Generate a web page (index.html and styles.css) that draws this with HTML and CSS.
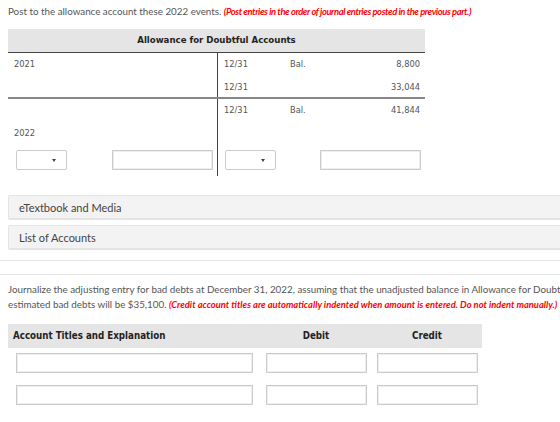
FILE: index.html
```html
<!DOCTYPE html>
<html>
<head>
	<meta charset="utf-8">
	<link rel="stylesheet" href="styles.css">
</head>
<body>
<div class="page">
	<p class="intro">Post to the allowance account these 2022 events. <em class="note top">(Post entries in the order of journal entries posted in the previous part.)</em></p>

	<div class="taccount">
		<div class="thead">Allowance for Doubtful Accounts</div>
		<div class="trow">
			<div class="tleft">2021</div>
			<div class="tright"><span class="d">12/31</span><span class="b">Bal.</span><span class="a">8,800</span></div>
		</div>
		<div class="trow sep">
			<div class="tleft"></div>
			<div class="tright"><span class="d">12/31</span><span class="b"></span><span class="a">33,044</span></div>
		</div>
		<div class="trow">
			<div class="tleft"></div>
			<div class="tright"><span class="d">12/31</span><span class="b">Bal.</span><span class="a">41,844</span></div>
		</div>
		<div class="trow">
			<div class="tleft">2022</div>
			<div class="tright"></div>
		</div>
		<div class="trow inrow">
			<div class="tleft"><span class="sel"><i></i></span><span class="box"></span></div>
			<div class="tright"><span class="sel"><i></i></span><span class="box"></span></div>
		</div>
	</div>

	<div class="links">
		<div class="link">eTextbook and Media</div>
		<div class="link">List of Accounts</div>
	</div>
	<div class="rule"></div>
	<div class="rule second"></div>

	<p class="intro task">Journalize the adjusting entry for bad debts at December 31, 2022, assuming that the unadjusted balance in Allowance for Doubtful Accounts<br>estimated bad debts will be $35,100. <em class="note">(Credit account titles are automatically indented when amount is entered. Do not indent manually.)</em></p>

	<div class="journal">
		<div class="jhead">
			<div class="jt">Account Titles and Explanation</div>
			<div class="jd">Debit</div>
			<div class="jc">Credit</div>
		</div>
		<div class="jrow">
			<div class="jt"><span class="box wide"></span></div>
			<div class="jd"><span class="box"></span></div>
			<div class="jc"><span class="box"></span></div>
		</div>
		<div class="jrow">
			<div class="jt"><span class="box wide"></span></div>
			<div class="jd"><span class="box"></span></div>
			<div class="jc"><span class="box"></span></div>
		</div>
	</div>
</div>
</body>
</html>
```
FILE: styles.css
```css
*{margin:0;padding:0;box-sizing:border-box;}
html,body{background:#fff;overflow:hidden;}
body{font-family:Lato,"Noto Sans",sans-serif;color:#555;}
.page{width:640px;padding-top:4px;}

.intro{
	padding-left:8px;
	font-size:9.8px;
	line-height:15px;
	white-space:nowrap;
}
.note{
	color:#f00;
	font-weight:bold;
	font-style:italic;
	font-size:9.4px;
}
.note.top{letter-spacing:-0.4px;}

/* T account */
.taccount{
	margin:10px 0 0 8px;
	width:417px;
	font-family:"DejaVu Sans",Verdana,sans-serif;
	font-size:8.3px;
	color:#555;
}
.thead{
	height:24px;
	line-height:23px;
	background:#e5e5e5;
	border-bottom:1px solid #444;
	text-align:center;
	font-weight:bold;
	font-size:8.6px;
	color:#222;
}
.trow{
	display:grid;
	grid-template-columns:209px 208px;
	height:23px;
}
.trow.sep{border-bottom:2px solid #888;}
.tleft{padding:6px 0 0 6px;}
.tright{
	border-left:1px solid #444;
	display:grid;
	grid-template-columns:66px 60px 1fr;
	padding:6px 5px 0 6px;
}
.tright .a{text-align:right;}
.inrow{height:31px;}
.inrow .tleft,.inrow .tright{display:flex;padding:5px 0 0 8px;}
.inrow .tleft{gap:45px;}
.inrow .tright{gap:44px;padding-left:7px;}

.sel{
	display:block;
	position:relative;
	width:51px;
	height:20px;
	border:1px solid #ccc;
	border-radius:2px;
	background:#fff;
}
.sel i{
	position:absolute;
	right:10px;
	top:8px;
	border-left:2px solid transparent;
	border-right:2px solid transparent;
	border-top:3px solid #444;
}
.box{
	display:block;
	width:101px;
	height:20px;
	border:1px solid #ccc;
	box-shadow:inset 0 0 0 1px #eee;
	background:#fff;
}

/* links */
.links{margin:19px 0 0 8px;}
.link{
	height:25px;
	line-height:24px;
	padding-left:10px;
	background:#f3f3f3;
	border:1px solid #e4e4e4;
	border-bottom-width:2px;
	border-radius:2px;
	font-size:11px;
	color:#444;
}
.link + .link{margin-top:5px;}
.rule{border-top:1px solid #e4e4e4;margin-top:10px;}
.rule.second{margin-top:13px;}

.task{margin-top:7px;}

/* journal */
.journal{margin:12px 0 0 8px;width:474px;}
.jhead,.jrow{
	display:grid;
	grid-template-columns:252px 112px 110px;
}
.jhead{
	height:24px;
	line-height:24px;
	background:#e5e5e5;
	font-family:"DejaVu Sans Condensed","DejaVu Sans",sans-serif;
	font-weight:bold;
	font-size:9.7px;
	color:#222;
}
.jhead .jt{padding-left:5px;}
.jhead .jd,.jhead .jc{text-align:center;}
.jrow{height:32px;padding-top:5px;}
.jrow .jt{padding-left:8px;}
.jrow .jd{padding-left:6px;}
.jrow .jc{padding-left:5px;}
.box.wide{width:237px;}
```
